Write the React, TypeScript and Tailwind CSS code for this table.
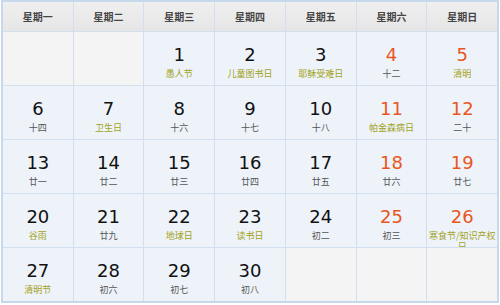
type Day = { d: number; sub: string; fest?: boolean; red?: boolean };

const heads = ["星期一", "星期二", "星期三", "星期四", "星期五", "星期六", "星期日"];

const days: (Day | null)[] = [
  null,
  null,
  { d: 1, sub: "愚人节", fest: true },
  { d: 2, sub: "儿童图书日", fest: true },
  { d: 3, sub: "耶稣受难日", fest: true },
  { d: 4, sub: "十二", red: true },
  { d: 5, sub: "清明", fest: true, red: true },
  { d: 6, sub: "十四" },
  { d: 7, sub: "卫生日", fest: true },
  { d: 8, sub: "十六" },
  { d: 9, sub: "十七" },
  { d: 10, sub: "十八" },
  { d: 11, sub: "帕金森病日", fest: true, red: true },
  { d: 12, sub: "二十", red: true },
  { d: 13, sub: "廿一" },
  { d: 14, sub: "廿二" },
  { d: 15, sub: "廿三" },
  { d: 16, sub: "廿四" },
  { d: 17, sub: "廿五" },
  { d: 18, sub: "廿六", red: true },
  { d: 19, sub: "廿七", red: true },
  { d: 20, sub: "谷雨", fest: true },
  { d: 21, sub: "廿九" },
  { d: 22, sub: "地球日", fest: true },
  { d: 23, sub: "读书日", fest: true },
  { d: 24, sub: "初二" },
  { d: 25, sub: "初三", red: true },
  { d: 26, sub: "寒食节/知识产权日", fest: true, red: true },
  { d: 27, sub: "清明节", fest: true },
  { d: 28, sub: "初六" },
  { d: 29, sub: "初七" },
  { d: 30, sub: "初八" },
  null,
  null,
  null,
];

const cjk = { fontFamily: '"Noto Sans CJK SC", "Noto Sans", sans-serif' };

function Cell({ day }: { day: Day | null }) {
  if (!day) return <div className="h-[53px] bg-[#f4f4f4]" />;
  return (
    <div className="h-[53px] bg-[#edf3f9] flex flex-col items-center pt-[12px] overflow-hidden">
      <span
        className={`text-[18px] leading-[22px] ${day.red ? "text-[#e9561f]" : "text-[#111]"}`}
        style={{ fontFamily: '"DejaVu Sans", Verdana, sans-serif' }}
      >
        {day.d}
      </span>
      <span
        className={`w-full break-all text-[9px] leading-[11px] text-center mt-[2px] ${day.fest ? "text-[#a3a21a]" : "text-[#555]"}`}
        style={cjk}
      >
        {day.sub}
      </span>
    </div>
  );
}

export default function App() {
  return (
    <div className="w-[500px] h-[305px] bg-white">
      <div className="ml-[1px] w-[498px] border-2 border-[#c6d8ec] grid grid-cols-7 gap-px bg-[#d2dfee]">
        {heads.map((h) => (
          <div
            key={h}
            className="h-[29px] flex items-center justify-center bg-gradient-to-b from-[#efefef] to-[#e6e6e6] text-[10px] font-bold text-[#444]"
            style={cjk}
          >
            {h}
          </div>
        ))}
        {days.map((day, i) => (
          <Cell key={i} day={day} />
        ))}
      </div>
    </div>
  );
}
